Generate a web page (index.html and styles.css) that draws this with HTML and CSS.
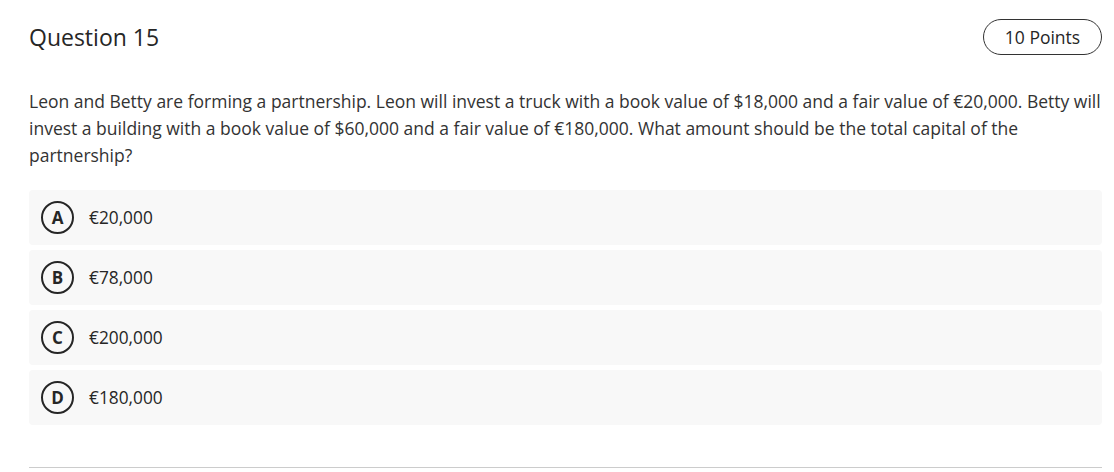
FILE: index.html
```html
<!DOCTYPE html>
<html>
<head>
<meta charset="utf-8">
<link rel="stylesheet" href="styles.css">
</head>
<body>
<div class="question">
  <div class="header">
    <h1 class="title">Question 15</h1>
    <span class="points">10 Points</span>
  </div>
  <p class="text">Leon and Betty are forming a partnership. Leon will invest a truck with a book value of $18,000 and a fair value of €20,000. Betty will invest a building with a book value of $60,000 and a fair value of €180,000. What amount should be the total capital of the partnership?</p>
  <div class="options">
    <div class="option"><span class="letter">A</span><span class="label">€20,000</span></div>
    <div class="option"><span class="letter">B</span><span class="label">€78,000</span></div>
    <div class="option"><span class="letter">C</span><span class="label">€200,000</span></div>
    <div class="option"><span class="letter">D</span><span class="label">€180,000</span></div>
  </div>
  <div class="divider"></div>
</div>
</body>
</html>
```
FILE: styles.css
```css
html, body {
  margin: 0;
  padding: 0;
  background: #ffffff;
}
body {
  font-family: "Open Sans", "Noto Sans", sans-serif;
  color: #333333;
}
.question {
  padding: 19px 12px 0 29px;
}
.header {
  display: flex;
  align-items: center;
  justify-content: space-between;
  height: 36px;
}
.title {
  margin: 0;
  font-size: 23px;
  font-weight: 400;
  color: #262626;
}
.points {
  display: inline-flex;
  align-items: center;
  justify-content: center;
  height: 34px;
  width: 117px;
  border: 1px solid #333333;
  border-radius: 18px;
  font-size: 17.5px;
  color: #262626;
}
.text {
  margin: 33px 0 0 0;
  font-size: 17.5px;
  line-height: 27px;
  color: #333333;
}
.options {
  margin-top: 21px;
  display: flex;
  flex-direction: column;
  gap: 5px;
}
.option {
  height: 55px;
  background: #f8f8f8;
  border-radius: 4px;
  display: flex;
  align-items: center;
  padding-left: 12px;
}
.letter {
  box-sizing: border-box;
  width: 33px;
  height: 33px;
  border: 2px solid #262626;
  border-radius: 50%;
  display: flex;
  align-items: center;
  justify-content: center;
  font-size: 17px;
  font-weight: 700;
  color: #262626;
}
.label {
  margin-left: 15px;
  font-size: 17.3px;
  color: #262626;
}
.divider {
  margin-top: 42px;
  height: 1px;
  background: #cccccc;
}
```
